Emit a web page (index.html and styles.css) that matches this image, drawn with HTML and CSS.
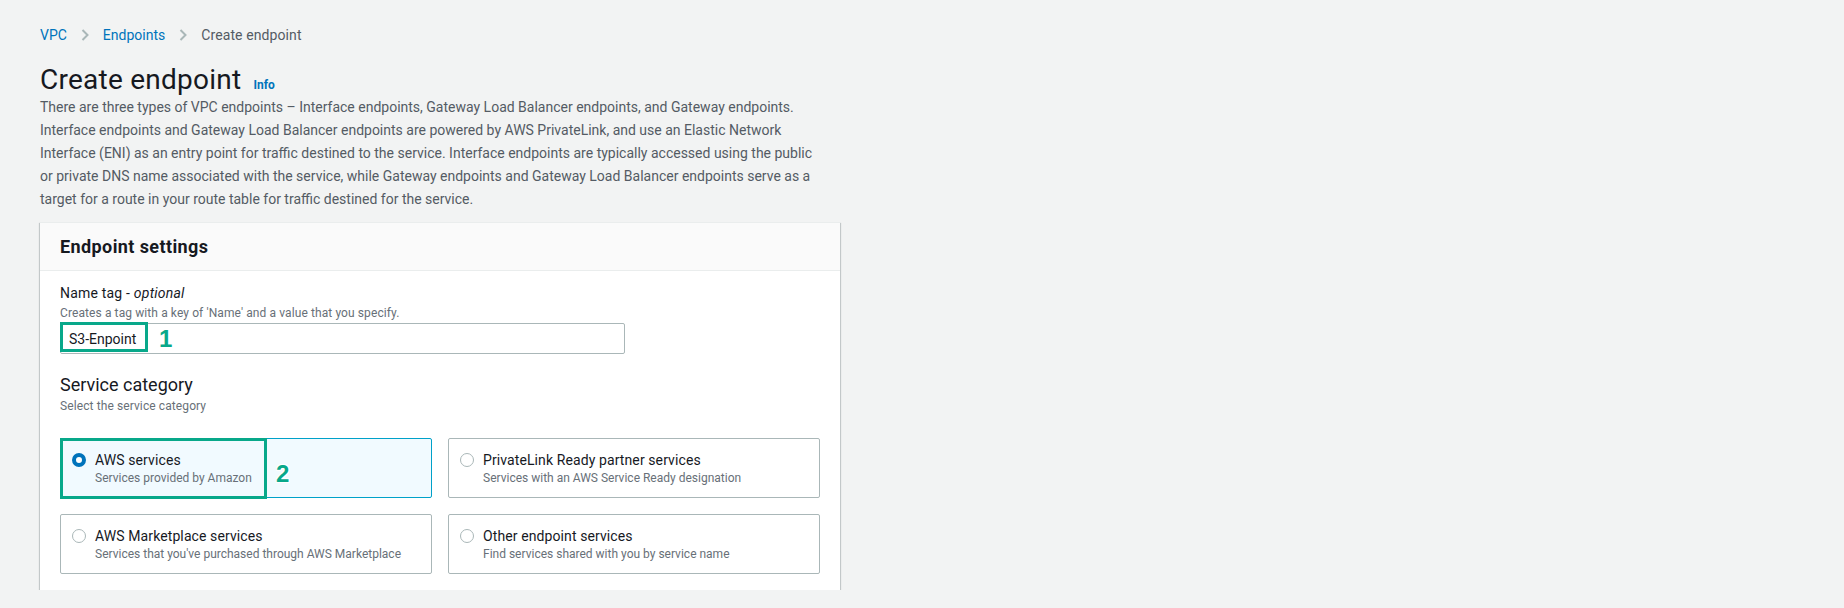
FILE: index.html
```html
<!DOCTYPE html>
<html lang="en">
<head>
<meta charset="utf-8">
<title>Create endpoint</title>
<link rel="stylesheet" href="styles.css">
</head>
<body>
<div class="page">
  <nav class="crumbs">
    <a class="crumb-link" href="#">VPC</a>
    <svg class="chev" width="8" height="12" viewBox="0 0 8 12"><path d="M1.5 1 L6.5 6 L1.5 11" fill="none" stroke="#aab7b8" stroke-width="2"/></svg>
    <a class="crumb-link" href="#">Endpoints</a>
    <svg class="chev" width="8" height="12" viewBox="0 0 8 12"><path d="M1.5 1 L6.5 6 L1.5 11" fill="none" stroke="#aab7b8" stroke-width="2"/></svg>
    <span class="crumb-current">Create endpoint</span>
  </nav>

  <div class="title-row">
    <h1 class="title">Create endpoint</h1>
    <a class="info" href="#">Info</a>
  </div>

  <p class="desc">There are three types of VPC endpoints – Interface endpoints, Gateway Load Balancer endpoints, and Gateway endpoints.<br>Interface endpoints and Gateway Load Balancer endpoints are powered by AWS PrivateLink, and use an Elastic Network<br>Interface (ENI) as an entry point for traffic destined to the service. Interface endpoints are typically accessed using the public<br>or private DNS name associated with the service, while Gateway endpoints and Gateway Load Balancer endpoints serve as a<br>target for a route in your route table for traffic destined for the service.</p>

  <section class="card">
    <header class="card-head">Endpoint settings</header>
    <div class="card-body">
      <div class="field">
        <div class="label">Name tag - <i>optional</i></div>
        <div class="hint">Creates a tag with a key of 'Name' and a value that you specify.</div>
        <div class="input-wrap">
          <div class="input">S3-Enpoint</div>
          <div class="mark mark-1"></div>
          <span class="num num-1">1</span>
        </div>
      </div>

      <div class="field field-cat">
        <div class="sub-title">Service category</div>
        <div class="hint">Select the service category</div>
      </div>

      <div class="options">
        <div class="option selected">
          <span class="radio on"></span>
          <div class="opt-text">
            <div class="opt-title">AWS services</div>
            <div class="opt-desc">Services provided by Amazon</div>
          </div>
          <div class="mark mark-2"></div>
          <span class="num num-2">2</span>
        </div>
        <div class="option">
          <span class="radio"></span>
          <div class="opt-text">
            <div class="opt-title">PrivateLink Ready partner services</div>
            <div class="opt-desc">Services with an AWS Service Ready designation</div>
          </div>
        </div>
        <div class="option">
          <span class="radio"></span>
          <div class="opt-text">
            <div class="opt-title">AWS Marketplace services</div>
            <div class="opt-desc">Services that you've purchased through AWS Marketplace</div>
          </div>
        </div>
        <div class="option">
          <span class="radio"></span>
          <div class="opt-text">
            <div class="opt-title">Other endpoint services</div>
            <div class="opt-desc">Find services shared with you by service name</div>
          </div>
        </div>
      </div>
    </div>
  </section>
</div>
</body>
</html>
```

FILE: styles.css
```css
* { box-sizing: border-box; }
html, body { margin: 0; padding: 0; }
body {
  background: #f2f3f3;
  font-family: Roboto, "Liberation Sans", Arial, sans-serif;
  color: #16191f;
  font-size: 14px;
  line-height: 20px;
}
.page {
  padding: 25px 40px 0 40px;
}
.crumbs {
  display: flex;
  align-items: center;
  height: 20px;
}
.crumb-link {
  color: #0073bb;
  text-decoration: none;
}
.chev {
  margin: 0 14px;
}
.crumb-current {
  color: #545b64;
  letter-spacing: 0.1px;
}
.title-row {
  display: flex;
  align-items: baseline;
  margin-top: 17px;
  height: 34px;
}
.title {
  margin: 0;
  font-size: 28px;
  line-height: 36px;
  font-weight: 400;
  letter-spacing: 0.25px;
  color: #16191f;
}
.info {
  margin-left: 12px;
  font-size: 12px;
  font-weight: 700;
  color: #0073bb;
  text-decoration: none;
}
.desc {
  margin: 0;
  color: #545b64;
  font-size: 14px;
  line-height: 23px;
}
.card {
  margin-top: 11px;
  width: 800px;
  background: #fff;
  border-top: 1px solid #eaeded;
  box-shadow: 0 1px 1px 0 rgba(0,28,36,.3), 1px 1px 1px 0 rgba(0,28,36,.15), -1px 1px 1px 0 rgba(0,28,36,.15);
}
.card-head {
  height: 48px;
  display: flex;
  align-items: center;
  padding: 0 20px;
  background: #fafafa;
  border-bottom: 1px solid #eaeded;
  font-size: 18px;
  font-weight: 700;
  letter-spacing: 0.4px;
}
.card-body {
  padding: 12px 20px 16px 20px;
}
.label { line-height: 20px; letter-spacing: 0.2px; }
.hint {
  font-size: 12px;
  line-height: 16px;
  color: #687078;
  margin-top: 2px;
  letter-spacing: 0.1px;
}
.input-wrap {
  position: relative;
  margin-top: 2px;
  width: 565px;
}
.input {
  height: 31px;
  border: 1px solid #aab7b8;
  border-radius: 2px;
  padding: 0 8px;
  display: flex;
  align-items: center;
  background: #fff;
}
.mark {
  position: absolute;
  border: 3px solid #08a88a;
  pointer-events: none;
}
.mark-1 {
  left: 0;
  top: -1px;
  width: 88px;
  height: 30px;
}
.num {
  position: absolute;
  color: #08a88a;
  font-weight: 700;
  font-family: "Liberation Sans", Arial, sans-serif;
  text-shadow: 0 0 2px #fff, 0 0 2px #fff, 1px 1px 0 #fff, -1px -1px 0 #fff, 1px -1px 0 #fff, -1px 1px 0 #fff;
}
.num-1 {
  left: 99px;
  top: 3px;
  font-size: 24px;
  line-height: 26px;
}
.field-cat {
  margin-top: 19px;
}
.sub-title {
  font-size: 18px;
  line-height: 24px;
}
.field-cat .hint { margin-top: 1px; }
.options {
  margin-top: 24px;
  display: grid;
  grid-template-columns: 1fr 1fr;
  gap: 16px;
}
.option {
  position: relative;
  display: flex;
  align-items: flex-start;
  gap: 9px;
  height: 60px;
  padding: 11px 11px;
  border: 1px solid #aab7b8;
  border-radius: 2px;
  background: #fff;
}
.option.selected {
  background: #f1faff;
  border-color: #00a1c9;
}
.radio {
  flex: none;
  width: 14px;
  height: 14px;
  margin-top: 3px;
  border-radius: 50%;
  border: 1.5px solid #aab7b8;
  background: #fff;
}
.radio.on {
  border: 4px solid #0073bb;
}
.opt-title {
  line-height: 20px;
  letter-spacing: 0.1px;
}
.opt-desc {
  font-size: 12px;
  line-height: 16px;
  color: #687078;
}
.mark-2 {
  left: -1px;
  top: -1px;
  width: 207px;
  height: 61px;
}
.num-2 {
  left: 215px;
  top: 22px;
  font-size: 24px;
  line-height: 26px;
}
```
